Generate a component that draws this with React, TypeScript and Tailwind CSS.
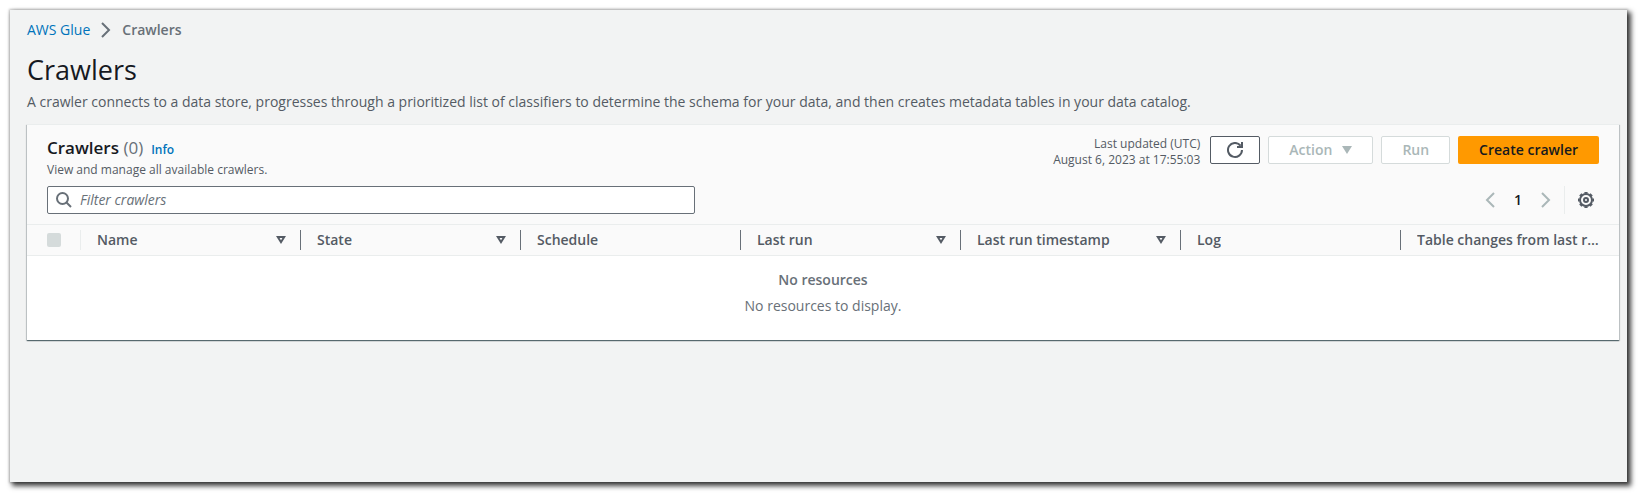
import type { ReactNode } from "react";

type Column = { label: string; sortable: boolean };

const columns: Column[] = [
  { label: "Name", sortable: true },
  { label: "State", sortable: true },
  { label: "Schedule", sortable: false },
  { label: "Last run", sortable: true },
  { label: "Last run timestamp", sortable: true },
  { label: "Log", sortable: false },
  { label: "Table changes from last r…", sortable: false },
];

const gearAngles = [0, 45, 90, 135, 180, 225, 270, 315];

function Chevron({ direction, className }: { direction: "left" | "right"; className: string }) {
  return (
    <svg viewBox="0 0 16 16" className={`size-4 ${className}`} fill="none" stroke="currentColor" strokeWidth="2" aria-hidden="true">
      <path d={direction === "right" ? "M4 1l7 7-7 7" : "M12 1L5 8l7 7"} />
    </svg>
  );
}

function RefreshIcon() {
  return (
    <svg viewBox="0 0 16 16" className="size-4" fill="none" stroke="currentColor" strokeWidth="2" aria-hidden="true">
      <path d="M15 8a7 7 0 1 1-1.6-4.5" />
      <path d="M10 5h5V0" />
      <path d="M12 4.5h2.500v-2z" fill="currentColor" stroke="none" />
    </svg>
  );
}

function SearchIcon() {
  return (
    <svg viewBox="0 0 16 16" className="size-4" fill="none" stroke="currentColor" strokeWidth="2" aria-hidden="true">
      <circle cx="6.500" cy="6.500" r="5.500" />
      <path d="M10.500 10.500L15 15" />
    </svg>
  );
}

function GearIcon() {
  return (
    <svg viewBox="0 0 16 16" className="size-4" fill="none" stroke="currentColor" aria-hidden="true">
      <circle cx="8" cy="8" r="6" strokeWidth="2" />
      <circle cx="8" cy="8" r="2" strokeWidth="2" />
      {gearAngles.map((angle) => (
        <path key={angle} d="M6.400 .8h3.200" strokeWidth="1.600" transform={`rotate(${angle} 8 8)`} />
      ))}
    </svg>
  );
}

function SortIcon() {
  return (
    <svg viewBox="0 0 10 10" className="size-2.5 shrink-0" fill="none" stroke="currentColor" strokeWidth="2" aria-hidden="true">
      <path d="M1.800 2h6.400L5 7.200z" />
    </svg>
  );
}

function OutlineButton({ children, disabled }: { children: ReactNode; disabled?: boolean }) {
  return (
    <button
      type="button"
      disabled={disabled}
      className="flex h-7 items-center gap-2.5 rounded-xs border border-[#d5dbdb] bg-white px-5 text-sm font-semibold text-[#aab7b8]"
    >
      {children}
    </button>
  );
}

function Header() {
  return (
    <header className="px-[17px]">
      <nav aria-label="Breadcrumb">
        <ol className="flex h-10 items-center gap-2 text-sm text-[#687078]">
          <li>
            <a href="#glue" className="text-[#0073bb]">AWS Glue</a>
          </li>
          <li className="flex items-center gap-2">
            <Chevron direction="right" className="text-[#687078]" />
            <span className="font-semibold" aria-current="page">Crawlers</span>
          </li>
        </ol>
      </nav>
      <h1 className="text-[27px] leading-10 text-[#16191f]">Crawlers</h1>
      <p className="pb-2.5 text-sm leading-6 text-[#545b64]">
        A crawler connects to a data store, progresses through a prioritized list of classifiers to determine the schema for your data, and then creates metadata tables in your data catalog.
      </p>
    </header>
  );
}

function Toolbar() {
  return (
    <div className="bg-[#fafafa] px-5 pt-[11px] pb-2.5">
      <div className="flex items-start justify-between">
        <div>
          <div className="flex h-6 items-baseline gap-2">
            <h2 className="text-[17px] leading-6 font-semibold text-[#16191f]">
              Crawlers <span className="font-normal text-[#687078]">(0)</span>
            </h2>
            <a href="#info" className="text-xs font-semibold text-[#0073bb]">Info</a>
          </div>
          <p className="pt-0.5 text-xs text-[#545b64]">View and manage all available crawlers.</p>
        </div>
        <div className="flex items-start gap-2">
          <p className="pr-0.5 text-right text-xs text-[#545b64]">
            Last updated (UTC)
            <br />
            August 6, 2023 at 17:55:03
          </p>
          <button
            type="button"
            aria-label="Refresh"
            className="flex h-7 w-[50px] items-center justify-center rounded-xs border border-[#545b64] bg-white text-[#545b64]"
          >
            <RefreshIcon />
          </button>
          <OutlineButton disabled>
            Action
            <svg viewBox="0 0 10 8" className="h-2 w-2.5" fill="currentColor" aria-hidden="true">
              <path d="M0 0h10L5 8z" />
            </svg>
          </OutlineButton>
          <OutlineButton disabled>Run</OutlineButton>
          <button type="button" className="h-7 rounded-xs bg-[#ff9900] px-[21px] text-sm font-semibold text-[#16191f]">
            Create crawler
          </button>
        </div>
      </div>
      <div className="mt-2 flex items-center justify-between">
        <label className="flex h-7 w-2/5 min-w-[648px] items-center gap-2 rounded-xs border border-[#687078] bg-white px-2 text-[#687078]">
          <SearchIcon />
          <input
            type="search"
            aria-label="Filter crawlers"
            placeholder="Filter crawlers"
            className="min-w-0 flex-1 bg-transparent text-sm italic outline-none placeholder:text-[#687078]"
          />
        </label>
        <div className="flex items-center">
          <div className="flex items-center gap-3 text-[#aab7b8]">
            <button type="button" disabled aria-label="Previous page"><Chevron direction="left" className="" /></button>
            <button type="button" aria-current="page" className="w-4 text-sm font-semibold text-[#16191f]">1</button>
            <button type="button" disabled aria-label="Next page"><Chevron direction="right" className="" /></button>
          </div>
          <div className="ml-2.5 flex h-7 items-center border-l border-[#eaeded] pr-[5px] pl-[13px]">
            <button type="button" aria-label="Preferences" className="text-[#545b64]"><GearIcon /></button>
          </div>
        </div>
      </div>
    </div>
  );
}

function CrawlersTable() {
  return (
    <table className="w-full table-fixed border-collapse text-sm">
      <thead className="border-y border-[#eaeded] bg-[#fafafa] text-[#545b64]">
        <tr>
          <th scope="col" className="w-[54px] p-0">
            <div className="flex h-5 items-center border-r border-[#eaeded] pl-5">
              <input type="checkbox" disabled aria-label="Select all crawlers" className="size-3.5 appearance-none rounded-xs bg-[#d5dbdb]" />
            </div>
          </th>
          {columns.map((column, index) => (
            <th key={column.label} scope="col" className={`px-0 py-[5px] text-left font-semibold ${index < columns.length - 1 ? "w-[220px]" : ""}`}>
              <div
                className={`flex h-5 items-center justify-between pl-4 ${
                  index < columns.length - 1 ? "border-r border-[#687078] pr-3.5" : ""
                }`}
              >
                <span className="truncate">{column.label}</span>
                {column.sortable && <SortIcon />}
              </div>
            </th>
          ))}
        </tr>
      </thead>
      <tbody className="bg-white text-[#687078]">
        <tr>
          <td colSpan={8} className="px-5 pt-3.5 pb-5 text-center">
            <p className="pb-1.5 font-semibold">No resources</p>
            <p className="pb-1">No resources to display.</p>
          </td>
        </tr>
      </tbody>
    </table>
  );
}

export default function App() {
  return (
    <div className="flex min-h-screen bg-white pt-2.5 pr-[18px] pb-[17px] pl-2.5 font-['Open_Sans','Noto_Sans',sans-serif]">
      <main className="min-w-0 flex-1 bg-[#f2f3f3] shadow-[3px_3px_5px_1px_#000000bf,0_0_2px_1px_#00000033]">
        <Header />
        <section className="mr-2 ml-[17px] border-t border-[#eaeded] shadow-[0_1px_1px_0_#001c2480,1px_1px_1px_0_#001c2426,-1px_1px_1px_0_#001c2426]">
          <Toolbar />
          <CrawlersTable />
        </section>
      </main>
    </div>
  );
}
